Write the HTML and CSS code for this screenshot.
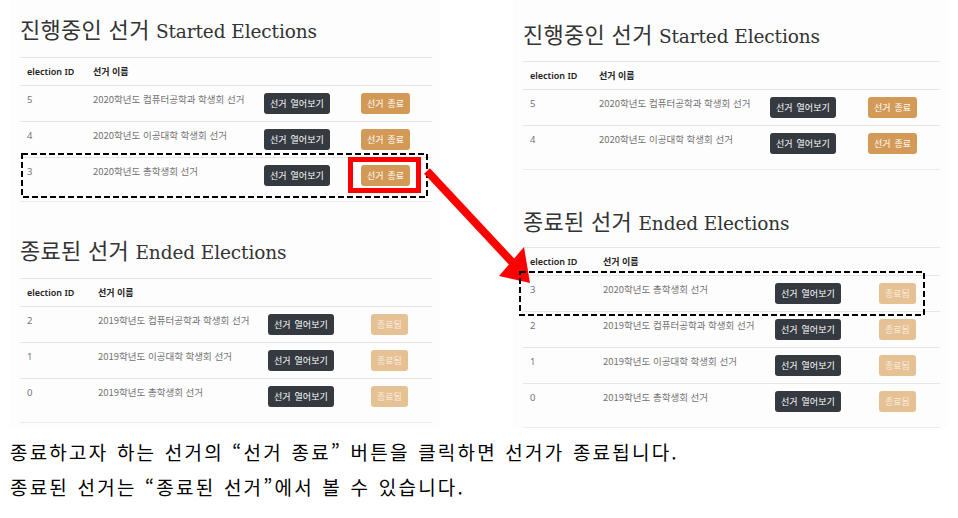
FILE: index.html
```html
<!DOCTYPE html>
<html lang="ko">
<head>
<meta charset="utf-8">
<title>선거 종료 안내</title>
<link rel="stylesheet" href="styles.css">
</head>
<body>
<div class="page">
  <div class="shots">
    <section class="shot shot-left">
      <h2 class="title"><span class="ko">진행중인 선거</span> <span class="en">Started Elections</span></h2>
      <div class="tbl-wrap">
        <table class="tbl t-ls">
          <colgroup><col class="c1"><col class="c2"><col class="c3"><col class="c4"></colgroup>
          <thead><tr><th>election ID</th><th>선거 이름</th><th></th><th></th></tr></thead>
          <tbody>
            <tr><td>5</td><td>2020학년도 컴퓨터공학과 학생회 선거</td><td><span class="btn btn-dark">선거 열어보기</span></td><td><span class="btn btn-end">선거 종료</span></td></tr>
            <tr><td>4</td><td>2020학년도 이공대학 학생회 선거</td><td><span class="btn btn-dark">선거 열어보기</span></td><td><span class="btn btn-end">선거 종료</span></td></tr>
            <tr><td>3</td><td>2020학년도 총학생회 선거</td><td><span class="btn btn-dark">선거 열어보기</span></td><td><span class="btn btn-end">선거 종료</span></td></tr>
          </tbody>
        </table>
      </div>
      <h2 class="title title-ended title-ended-left"><span class="ko">종료된 선거</span> <span class="en">Ended Elections</span></h2>
      <div class="tbl-wrap">
        <table class="tbl t-le">
          <colgroup><col class="c1"><col class="c2"><col class="c3"><col class="c4"></colgroup>
          <thead><tr><th>election ID</th><th>선거 이름</th><th></th><th></th></tr></thead>
          <tbody>
            <tr><td>2</td><td>2019학년도 컴퓨터공학과 학생회 선거</td><td><span class="btn btn-dark">선거 열어보기</span></td><td><span class="btn btn-done">종료됨</span></td></tr>
            <tr><td>1</td><td>2019학년도 이공대학 학생회 선거</td><td><span class="btn btn-dark">선거 열어보기</span></td><td><span class="btn btn-done">종료됨</span></td></tr>
            <tr><td>0</td><td>2019학년도 총학생회 선거</td><td><span class="btn btn-dark">선거 열어보기</span></td><td><span class="btn btn-done">종료됨</span></td></tr>
          </tbody>
        </table>
      </div>
    </section>

    <section class="shot shot-right">
      <h2 class="title"><span class="ko">진행중인 선거</span> <span class="en">Started Elections</span></h2>
      <div class="tbl-wrap">
        <table class="tbl t-rs">
          <colgroup><col class="c1"><col class="c2"><col class="c3"><col class="c4"></colgroup>
          <thead><tr><th>election ID</th><th>선거 이름</th><th></th><th></th></tr></thead>
          <tbody>
            <tr><td>5</td><td>2020학년도 컴퓨터공학과 학생회 선거</td><td><span class="btn btn-dark">선거 열어보기</span></td><td><span class="btn btn-end">선거 종료</span></td></tr>
            <tr><td>4</td><td>2020학년도 이공대학 학생회 선거</td><td><span class="btn btn-dark">선거 열어보기</span></td><td><span class="btn btn-end">선거 종료</span></td></tr>
          </tbody>
        </table>
      </div>
      <h2 class="title title-ended"><span class="ko">종료된 선거</span> <span class="en">Ended Elections</span></h2>
      <div class="tbl-wrap tbl-wrap-last">
        <table class="tbl t-re">
          <colgroup><col class="c1"><col class="c2"><col class="c3"><col class="c4"></colgroup>
          <thead><tr><th>election ID</th><th>선거 이름</th><th></th><th></th></tr></thead>
          <tbody>
            <tr><td>3</td><td>2020학년도 총학생회 선거</td><td><span class="btn btn-dark">선거 열어보기</span></td><td><span class="btn btn-done">종료됨</span></td></tr>
            <tr><td>2</td><td>2019학년도 컴퓨터공학과 학생회 선거</td><td><span class="btn btn-dark">선거 열어보기</span></td><td><span class="btn btn-done">종료됨</span></td></tr>
            <tr><td>1</td><td>2019학년도 이공대학 학생회 선거</td><td><span class="btn btn-dark">선거 열어보기</span></td><td><span class="btn btn-done">종료됨</span></td></tr>
            <tr><td>0</td><td>2019학년도 총학생회 선거</td><td><span class="btn btn-dark">선거 열어보기</span></td><td><span class="btn btn-done">종료됨</span></td></tr>
          </tbody>
        </table>
      </div>
    </section>

    <svg class="annot" width="958" height="434" viewBox="0 0 958 434" aria-hidden="true">
      <rect x="22" y="154" width="405" height="43" fill="none" stroke="#000" stroke-width="2" stroke-dasharray="6 3"/>
      <rect x="350.5" y="159.5" width="68" height="31" fill="none" stroke="#f00" stroke-width="5"/>
      <line x1="427" y1="171" x2="512" y2="262" stroke="#f00" stroke-width="8"/>
      <polygon points="530,283 499,276 524,247" fill="#f00"/>
      <rect x="520" y="272" width="404" height="43" fill="none" stroke="#000" stroke-width="2" stroke-dasharray="6 3"/>
    </svg>
  </div>

  <div class="caption">
    <p>종료하고자 하는 선거의 “선거 종료” 버튼을 클릭하면 선거가 종료됩니다.</p>
    <p>종료된 선거는 “종료된 선거”에서 볼 수 있습니다.</p>
  </div>
</div>
</body>
</html>
```

FILE: styles.css
```css
* { box-sizing: border-box; }

html, body {
  margin: 0;
  padding: 0;
  background: #fff;
}

body {
  font-family: "Noto Sans", "Noto Sans CJK KR", sans-serif;
  color: #222;
}

.page {
  width: 958px;
  height: 518px;
  overflow: hidden;
}

.shots {
  position: relative;
  display: flex;
  align-items: flex-start;
  height: 434px;
}

.shot {
  background: #fdfdfd;
  display: flex;
  flex-direction: column;
}

.shot-left {
  margin-left: 10px;
  width: 430px;
  height: 428px;
  padding: 14px 8px 0 10px;
}

.shot-right {
  margin-left: 73px;
  width: 435px;
  height: 428px;
  padding: 19px 8px 0 10px;
}

.title {
  margin: 0;
  height: 43px;
  line-height: 28px;
  font-weight: 400;
  color: #333;
  white-space: nowrap;
}

.title .ko {
  font-family: "Noto Sans CJK KR", sans-serif;
  font-size: 22px;
  letter-spacing: 0.3px;
}

.title .en {
  font-family: "DejaVu Serif", serif;
  font-size: 18.5px;
  letter-spacing: -0.1px;
}

.title-ended {
  margin-top: 36px;
}

.title-ended-left {
  margin-top: 33px;
}

.tbl-wrap {
  padding-bottom: 8px;
  border-bottom: 1px solid #ececec;
}

.tbl {
  border-collapse: collapse;
  table-layout: fixed;
  font-size: 9.5px;
}

.t-ls, .t-le { width: 412px; }
.t-rs, .t-re { width: 417px; }

.t-ls .c1 { width: 66px; }
.t-ls .c2 { width: 171px; }
.t-ls .c3 { width: 97px; }
.t-ls .c4 { width: 78px; }

.t-le .c1 { width: 71px; }
.t-le .c2 { width: 170px; }
.t-le .c3 { width: 103px; }
.t-le .c4 { width: 68px; }

.t-rs .c1 { width: 69px; }
.t-rs .c2 { width: 171px; }
.t-rs .c3 { width: 98px; }
.t-rs .c4 { width: 79px; }

.t-re .c1 { width: 73px; }
.t-re .c2 { width: 172px; }
.t-re .c3 { width: 104px; }
.t-re .c4 { width: 68px; }

.tbl th,
.tbl td {
  border-top: 1px solid #e6e6e6;
  padding: 7px 7px;
  line-height: 13px;
  vertical-align: top;
  text-align: left;
  white-space: nowrap;
}

.tbl th {
  font-weight: 600;
  color: #222;
  font-family: "Noto Sans", "Noto Sans CJK KR", sans-serif;
  font-size: 9px;
}

.tbl td {
  color: #737373;
  font-family: "Noto Sans CJK KR", sans-serif;
}

.tbl td:first-child {
  font-family: "Noto Sans", sans-serif;
}

.tbl thead tr {
  border-bottom: 1px solid #e6e6e6;
}

.btn {
  display: inline-block;
  height: 21px;
  line-height: 21px;
  padding: 0 6px;
  border-radius: 3px;
  color: #fff;
  font-family: "Noto Sans CJK KR", sans-serif;
  font-size: 9px;
  word-spacing: 1.5px;
  vertical-align: top;
}

.btn-dark { background: #343a40; }
.btn-end { background: #d39a57; }
.btn-done { background: #e6c193; color: #f8ece0; }

.annot {
  position: absolute;
  left: 0;
  top: 0;
  pointer-events: none;
}

.caption {
  padding-left: 10px;
  font-family: "Noto Sans CJK KR", sans-serif;
  font-size: 19px;
  letter-spacing: 2.2px;
  word-spacing: 1px;
  color: #000;
}

.caption p {
  margin: 0;
  line-height: 35px;
  white-space: nowrap;
}
```
